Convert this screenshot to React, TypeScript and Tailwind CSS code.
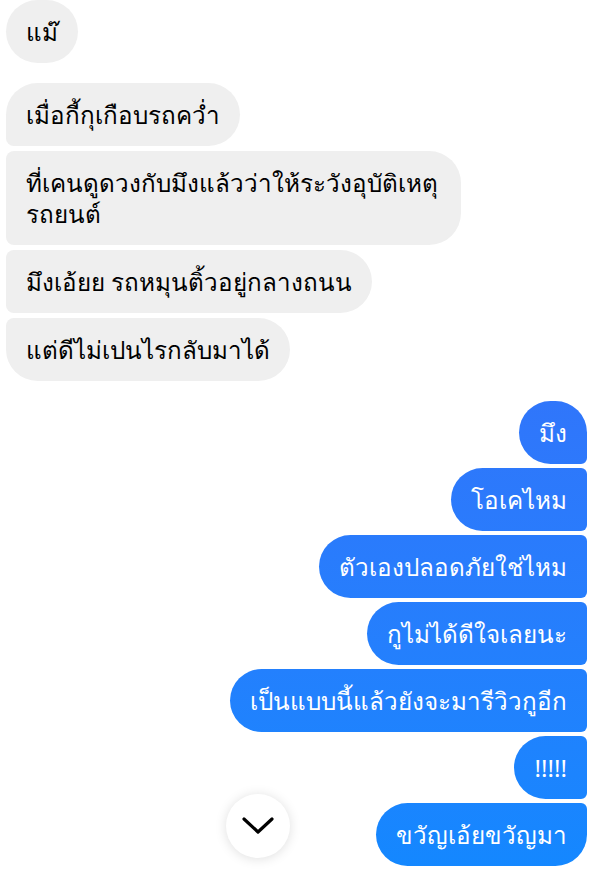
import React from 'react';
import clsx from 'clsx';

type Pos = 'first' | 'middle' | 'last' | 'single';
type Msg = { text: string; pos: Pos };

const incoming: Msg[] = [
  { text: 'เมื่อกี้กุเกือบรถคว่ำ', pos: 'first' },
  { text: 'ที่เคนดูดวงกับมึงแล้วว่าให้ระวังอุบัติเหตุรถยนต์', pos: 'middle' },
  { text: 'มึงเอ้ยย รถหมุนติ้วอยู่กลางถนน', pos: 'middle' },
  { text: 'แต่ดีไม่เปนไรกลับมาได้', pos: 'last' },
];

const outgoing: Msg[] = [
  { text: 'มึง', pos: 'first' },
  { text: 'โอเคไหม', pos: 'middle' },
  { text: 'ตัวเองปลอดภัยใช่ไหม', pos: 'middle' },
  { text: 'กูไม่ได้ดีใจเลยนะ', pos: 'middle' },
  { text: 'เป็นแบบนี้แล้วยังจะมารีวิวกูอีก', pos: 'middle' },
  { text: '!!!!!', pos: 'middle' },
  { text: 'ขวัญเอ้ยขวัญมา', pos: 'last' },
];

// corner shapes per position in a group (messenger style)
const inCorners: Record<Pos, string> = {
  single: 'rounded-[32px]',
  first: 'rounded-[32px] rounded-bl-[8px]',
  middle: 'rounded-[32px] rounded-l-[8px]',
  last: 'rounded-[32px] rounded-tl-[8px]',
};

const outCorners: Record<Pos, string> = {
  single: 'rounded-[32px]',
  first: 'rounded-[32px] rounded-br-[6px]',
  middle: 'rounded-[32px] rounded-r-[6px]',
  last: 'rounded-[32px] rounded-tr-[6px]',
};

function Bubble({ msg, mine }: { msg: Msg; mine?: boolean }) {
  return (
    <div
      className={clsx(
        'max-w-[455px] px-5 py-4 text-[24.2px] leading-[31px]',
        mine
          ? 'self-end bg-linear-to-b from-[#3c66f7] to-[#1288ff] bg-fixed text-white'
          : 'self-start bg-[#efefef] text-black',
        mine ? outCorners[msg.pos] : inCorners[msg.pos]
      )}
    >
      {msg.text}
    </div>
  );
}

export default function App() {
  return (
    <div className="relative h-[883px] overflow-hidden bg-white font-['Noto_Sans',sans-serif]">
      <div className="flex flex-col gap-5 pl-1.5 pr-[13px]">
        <Bubble msg={{ text: 'แม๊', pos: 'single' }} />

        <div className="flex flex-col gap-[5px]">
          {incoming.map((m, i) => (
            <Bubble key={i} msg={m} />
          ))}
        </div>

        <div className="flex flex-col gap-1">
          {outgoing.map((m, i) => (
            <Bubble key={i} msg={m} mine />
          ))}
        </div>
      </div>

      {/* scroll-to-bottom button */}
      <button className="absolute left-[226px] top-[794px] flex h-16 w-16 items-center justify-center rounded-full bg-white shadow-[0_1px_12px_rgba(0,0,0,0.13)]">
        <svg width="34" height="20" viewBox="0 0 34 20" fill="none">
          <path d="M3 3 L17 16 L31 3" stroke="black" strokeWidth="3.2" strokeLinecap="round" strokeLinejoin="round" />
        </svg>
      </button>
    </div>
  );
}
